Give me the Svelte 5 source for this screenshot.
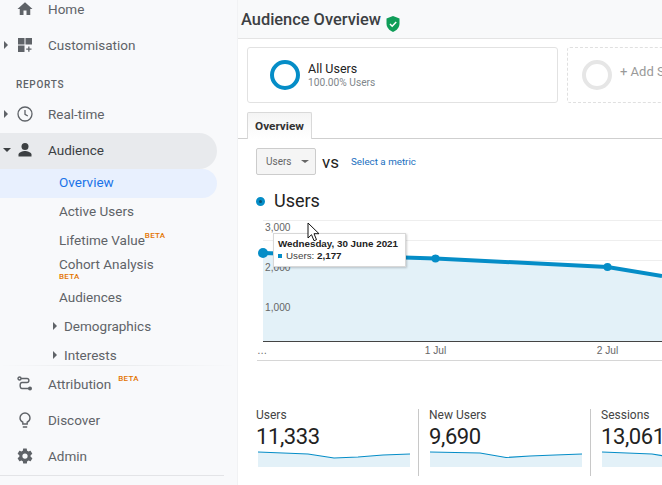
<script>
  const grid = [219.5, 239.5, 259.5, 279.5, 299.5, 319.5];
  const metrics = [
    { label: "Users", value: "11,333", spark: "0,1 50,3 76,7 100,6 125,4 152,3" },
    { label: "New Users", value: "9,690", spark: "0,1 50,2 76,6.500 100,5 125,4 152,3" },
    { label: "Sessions", value: "13,061", spark: "0,1 50,3 76,7 100,6 125,4 152,3" },
  ];
</script>

<div class="page">
  <nav class="side">
    <div class="row">
      <span class="icon">
        <svg viewBox="0 0 24 24" width="18" height="18"><path d="M10 20v-6h4v6h5v-8h3L12 3 2 12h3v8z" /></svg>
      </span>
      Home
    </div>
    <div class="row">
      <i class="arrow"></i>
      <span class="icon">
        <svg viewBox="0 0 16 16" width="16" height="16"><path d="M1 1h6.500v6.500H1zM8.500 1H15v6.500H8.500zM1 8.500h6.500V15H1zM11.200 9.500h1.300v2h2v1.300h-2v2h-1.300v-2h-2v-1.300h2z" /></svg>
      </span>
      Customisation
    </div>
    <div class="heading">REPORTS</div>
    <div class="row">
      <i class="arrow"></i>
      <span class="icon">
        <svg viewBox="0 0 16 16" width="16" height="16" fill="none" stroke="#5f6368" stroke-width="1.300"><circle cx="8" cy="8" r="7" /><path d="M8 4v4.300l2.800 1.700" /></svg>
      </span>
      Real-time
    </div>
    <div class="row active">
      <i class="arrow down"></i>
      <span class="icon dark">
        <svg viewBox="0 0 16 16" width="16" height="16"><circle cx="8" cy="4.500" r="3.500" /><path d="M1.500 14.500v-2c0-2.300 4.300-3.500 6.500-3.500s6.500 1.200 6.500 3.500v2z" /></svg>
      </span>
      Audience
    </div>
    <div class="sublist">
      <div class="sub current">Overview</div>
      <div class="sub">Active Users</div>
      <div class="sub">Lifetime Value<sup class="beta">BETA</sup></div>
      <div class="sub cohort">Cohort Analysis<span class="beta">BETA</span></div>
      <div class="sub audiences">Audiences</div>
      <div class="sub nested"><i class="arrow small"></i>Demographics</div>
      <div class="sub nested"><i class="arrow small"></i>Interests</div>
    </div>
    <div class="rule"></div>
    <div class="row attribution">
      <span class="icon">
        <svg viewBox="0 0 16 16" width="16" height="16" fill="none" stroke="#5f6368" stroke-width="1.400"><circle cx="2.500" cy="2.500" r="1.500" /><path d="M4 2.500h6c2.500 0 2.500 4 0 4H5c-2.500 0-2.500 6 0 6h7" /><circle cx="13" cy="12.500" r="2" fill="#5f6368" stroke="none" /></svg>
      </span>
      Attribution<sup class="beta">BETA</sup>
    </div>
    <div class="row">
      <span class="icon">
        <svg viewBox="0 0 16 16" width="16" height="16" fill="none" stroke="#5f6368" stroke-width="1.400"><path d="M5.800 12v-1.800C4 9.300 3 7.900 3 6a5 5 0 0 1 10 0c0 1.900-1 3.300-2.800 4.200V12zM5.800 15h4.400" /></svg>
      </span>
      Discover
    </div>
    <div class="row">
      <span class="icon">
        <svg viewBox="0 0 24 24" width="18" height="18"><path d="M19.400 13c0-.3.1-.6.100-1s0-.7-.1-1l2.100-1.600c.2-.2.2-.4.100-.6l-2-3.500c-.1-.2-.4-.3-.6-.2l-2.500 1c-.5-.4-1.100-.7-1.700-1l-.4-2.600c0-.3-.2-.5-.4-.5h-4c-.3 0-.5.200-.5.400l-.4 2.700c-.6.200-1.100.6-1.700 1l-2.500-1c-.2-.1-.5 0-.6.200l-2 3.500c-.1.200-.1.500.1.600L4.500 11c0 .3-.1.600-.1 1s0 .7.100 1l-2.100 1.600c-.2.200-.2.400-.1.600l2 3.500c.1.200.4.300.6.200l2.500-1c.5.400 1.100.7 1.700 1l.4 2.600c0 .2.200.4.500.4h4c.3 0 .5-.2.500-.4l.4-2.600c.6-.3 1.200-.6 1.700-1l2.500 1c.2.100.5 0 .6-.2l2-3.500c.1-.2.100-.5-.1-.6zM12 15.500a3.500 3.500 0 1 1 0-7 3.500 3.500 0 0 1 0 7z" /></svg>
      </span>
      Admin
    </div>
    <div class="foot"></div>
  </nav>

  <main>
    <header>
      <h1>Audience Overview</h1>
      <svg class="shield" viewBox="0 0 14 16" width="14" height="16">
        <path d="M7 0l6.500 2.500v5c0 3.800-2.700 7-6.500 8.500C3.200 14.500.500 11.300.500 7.500v-5z" fill="#0f9d58" />
        <path d="M4 8l2.200 2.200L10.200 6" fill="none" stroke="#fff" stroke-width="1.500" />
      </svg>
    </header>

    <section class="segments">
      <div class="segment">
        <span class="ring"></span>
        <div>
          <div class="seg-name">All Users</div>
          <div class="seg-sub">100.00% Users</div>
        </div>
      </div>
      <div class="segment add">
        <span class="ring grey"></span>
        <span class="add-label">+ Add Segment</span>
      </div>
    </section>

    <div class="tabs"><div class="tab">Overview</div></div>

    <div class="controls">
      <div class="select">Users<i></i></div>
      <span class="vs">vs</span>
      <span class="link">Select a metric</span>
    </div>

    <div class="legend"><span class="dot"></span>Users</div>

    <div class="chart">
      <svg viewBox="0 0 424 150" width="424" height="150">
        {#each grid as y}
          <line x1="25" x2="424" y1={y - 210} y2={y - 210} stroke="#eeeeee" />
        {/each}
        <polygon points="25,42 197.500,47.500 369.500,56 424,65 424,130 25,130" fill="#e3f1f8" />
        <line x1="25" x2="424" y1="130.500" y2="130.500" stroke="#444" />
        <polyline points="25,42 197.500,47.500 369.500,56 424,65" fill="none" stroke="#058dc7" stroke-width="4" />
        <circle cx="25" cy="42" r="5" fill="#058dc7" />
        <circle cx="197.500" cy="47.500" r="4" fill="#058dc7" />
        <circle cx="369.500" cy="56" r="4" fill="#058dc7" />
        <text x="27" y="19.500" class="axis">3,000</text>
        <text x="27" y="60" class="axis">2,000</text>
        <text x="27" y="100" class="axis">1,000</text>
        <text x="19" y="143" class="axis">…</text>
        <text x="197.500" y="143" class="axis mid">1 Jul</text>
        <text x="369.500" y="143" class="axis mid">2 Jul</text>
      </svg>
      <div class="tooltip">
        <div class="tip-date">Wednesday, 30 June 2021</div>
        <div class="tip-val"><i></i>Users: <b>2,177</b></div>
      </div>
      <svg class="cursor" viewBox="0 0 13 20" width="13" height="20">
        <path d="M1 1v15l3.500-3.300 2.500 6 2.500-1-2.500-6H12z" fill="#fff" stroke="#111" />
      </svg>
    </div>

    <section class="metrics">
      {#each metrics as m}
        <div class="metric">
          <div class="m-label">{m.label}</div>
          <div class="m-value">{m.value}</div>
          <svg viewBox="0 0 152 16" width="152" height="16">
            <polygon points="{m.spark} 152,16 0,16" fill="#e3f1f8" />
            <polyline points={m.spark} fill="none" stroke="#058dc7" stroke-width="1.200" />
          </svg>
        </div>
      {/each}
    </section>
  </main>
</div>

<style>
  :global(body) {
    margin: 0;
    overflow: hidden;
  }

  .page {
    display: flex;
    width: 662px;
    height: 485px;
    overflow: hidden;
    font-family: Roboto, "Liberation Sans", sans-serif;
    background: #fff;
  }

  .side {
    flex: 0 0 238px;
    margin-top: -9px;
    height: 494px;
    background: #f8f9fb;
    color: #5f6368;
    font-size: 13.500px;
    border-right: 1px solid #f1f2f4;
    box-sizing: border-box;
  }

  .row {
    position: relative;
    display: flex;
    align-items: center;
    height: 36px;
    width: 217px;
    padding-left: 48px;
    box-sizing: border-box;
  }

  .icon {
    position: absolute;
    left: 14px;
    width: 22px;
    height: 22px;
    display: flex;
    align-items: center;
    justify-content: center;
    fill: #5f6368;
  }

  .icon.dark {
    fill: #3c4043;
  }

  .arrow {
    position: absolute;
    left: 4px;
    border-left: 4px solid #5f6368;
    border-top: 4px solid transparent;
    border-bottom: 4px solid transparent;
  }

  .arrow.down {
    left: 3px;
    border-top: 4px solid #3c4043;
    border-bottom: 0;
    border-left: 4px solid transparent;
    border-right: 4px solid transparent;
  }

  .arrow.small {
    left: 53px;
  }

  .heading {
    height: 33px;
    padding-top: 14px;
    padding-left: 16px;
    box-sizing: border-box;
    font-size: 10px;
    font-weight: 500;
    letter-spacing: 0.7px;
    line-height: 16px;
  }

  .active {
    margin-top: 1px;
    padding-bottom: 2px;
    background: #e8eaed;
    color: #3c4043;
    border-radius: 0 18px 18px 0;
  }

  .sublist {
    height: 196px;
    overflow: hidden;
  }

  .sub {
    position: relative;
    display: flex;
    align-items: center;
    height: 29px;
    width: 217px;
    padding: 0 0 4px 59px;
    box-sizing: border-box;
  }

  .current {
    background: #e8f0fe;
    color: #1a73e8;
    border-radius: 0 15px 15px 0;
  }

  .nested {
    padding: 0 0 0 64px;
  }

  .cohort {
    display: block;
    height: 26px;
    padding-bottom: 0;
    line-height: 16px;
  }

  .cohort .beta {
    display: block;
    line-height: 7px;
    margin: 1px 0 0;
  }

  .audiences {
    padding: 0 0 0 59px;
  }

  .beta {
    color: #e37400;
    font-size: 8px;
    font-weight: 500;
    letter-spacing: 0.3px;
    margin-left: 0;
    align-self: flex-start;
    line-height: 10px;
    margin-top: 4px;
  }

  .attribution .beta {
    margin-left: 7px;
    margin-top: 8px;
  }

  .rule {
    height: 1px;
    background: linear-gradient(90deg, #f8f9fb, #e8eaec 40%, #f8f9fb);
  }

  .foot {
    width: 224px;
    height: 1px;
    margin-top: 1px;
    background: #e3e4e7;
  }

  main {
    flex: 1;
    min-width: 0;
  }

  header {
    display: flex;
    align-items: center;
    height: 38px;
    background: #f8f9fa;
    border-bottom: 1px solid #e4e4e4;
    padding-left: 3px;
  }

  h1 {
    margin: 0;
    font-size: 16.400px;
    font-weight: 500;
    color: #3c4043;
  }

  .shield {
    margin: 9px 0 0 5px;
  }

  .segments {
    display: flex;
    gap: 9px;
    padding: 8px 0 0 9px;
  }

  .segment {
    display: flex;
    flex: 0 0 311px;
    align-items: center;
    gap: 8px;
    height: 56px;
    box-sizing: border-box;
    padding-left: 22px;
    background: #fff;
    border: 1px solid #e2e2e2;
    border-radius: 3px;
  }

  .add {
    padding-left: 14px;
    border: 1px dashed #e0e0e0;
  }

  .ring {
    width: 30px;
    height: 30px;
    box-sizing: border-box;
    border: 4px solid #058dc7;
    border-radius: 50%;
  }

  .ring.grey {
    border-color: #e6e6e6;
  }

  .seg-name {
    font-size: 12.500px;
    color: #222;
    line-height: 14px;
  }

  .seg-sub {
    font-size: 10.200px;
    color: #80868b;
    line-height: 13px;
  }

  .add-label {
    margin-bottom: 8px;
    font-size: 13px;
    color: #999;
    white-space: nowrap;
  }

  .tabs {
    margin-top: 9px;
    padding-left: 9px;
    height: 26px;
    border-bottom: 1px solid #cfcfcf;
  }

  .tab {
    width: 65px;
    height: 27px;
    box-sizing: border-box;
    border: 1px solid #d9d9d9;
    border-bottom: 0;
    border-radius: 2px 2px 0 0;
    background: linear-gradient(#f4f4f4, #fff);
    font-size: 11.800px;
    font-weight: 700;
    color: #333;
    text-align: center;
    line-height: 26px;
  }

  .controls {
    display: flex;
    align-items: center;
    margin: 9px 0 0 18px;
  }

  .select {
    display: flex;
    align-items: center;
    width: 60px;
    height: 27px;
    box-sizing: border-box;
    padding-left: 9px;
    background: #f5f5f5;
    border: 1px solid #cccccc;
    border-radius: 2px;
    font-size: 10px;
    color: #666;
  }

  .select i {
    margin-left: 9px;
    border-top: 3px solid #666;
    border-left: 4px solid transparent;
    border-right: 4px solid transparent;
  }

  .vs {
    margin: 0 0 0 6px;
    font-size: 17px;
    color: #222;
  }

  .link {
    margin: 0 0 0 12px;
    font-size: 9.800px;
    color: #1a6fc0;
  }

  .legend {
    display: flex;
    align-items: center;
    height: 24px;
    margin: 13px 0 0 18px;
    font-size: 18px;
    color: #222;
  }

  .dot {
    width: 9px;
    height: 9px;
    margin: 2px 9px 0 0;
    box-sizing: border-box;
    border: 3px solid #058dc7;
    background: #0a4f6e;
    border-radius: 50%;
  }

  .chart {
    position: relative;
    height: 149px;
    margin-top: -1px;
    border-bottom: 1px solid #d6d6d6;
    margin-left: 19px;
  }

  .chart > svg:first-child {
    display: block;
    margin-left: -19px;
  }

  .axis {
    font-family: "Liberation Sans", sans-serif;
    font-size: 10.200px;
    fill: #666;
  }

  .mid {
    text-anchor: middle;
  }

  .tooltip {
    position: absolute;
    left: 16px;
    top: 22px;
    width: 133px;
    height: 34px;
    box-sizing: border-box;
    padding: 4px 4px;
    background: #fff;
    border: 1px solid #d8d8d8;
    box-shadow: 1px 1px 2px rgba(0, 0, 0, 0.2);
    font-family: "Liberation Sans", sans-serif;
    font-size: 9.800px;
    line-height: 12px;
    color: #222;
    white-space: nowrap;
  }

  .tip-date {
    font-weight: 700;
  }

  .tip-val {
    color: #444;
  }

  .tip-val b {
    color: #222;
  }

  .tip-val i {
    display: inline-block;
    width: 4px;
    height: 4px;
    margin: 0 4px 1px 0;
    background: #058dc7;
  }

  .cursor {
    position: absolute;
    left: 50px;
    top: 11px;
  }

  .metrics {
    display: flex;
    margin-top: 48px;
    padding-left: 8px;
  }

  .metric {
    flex: 0 0 172px;
    height: 67px;
    box-sizing: border-box;
    padding-left: 10px;
    border-right: 1px solid #c8c8c8;
  }

  .metric:first-child {
    flex-basis: 173px;
  }

  .metric:last-child {
    border-right: 0;
  }

  .metric svg {
    display: block;
    margin-left: 1px;
  }

  .metric:first-child svg {
    margin-left: 2px;
  }

  .m-label {
    margin-top: -1px;
    font-size: 12px;
    line-height: 14px;
    color: #444;
  }

  .m-value {
    margin-top: 1px;
    font-size: 22px;
    letter-spacing: -0.4px;
    line-height: 28px;
    color: #222;
  }
</style>
